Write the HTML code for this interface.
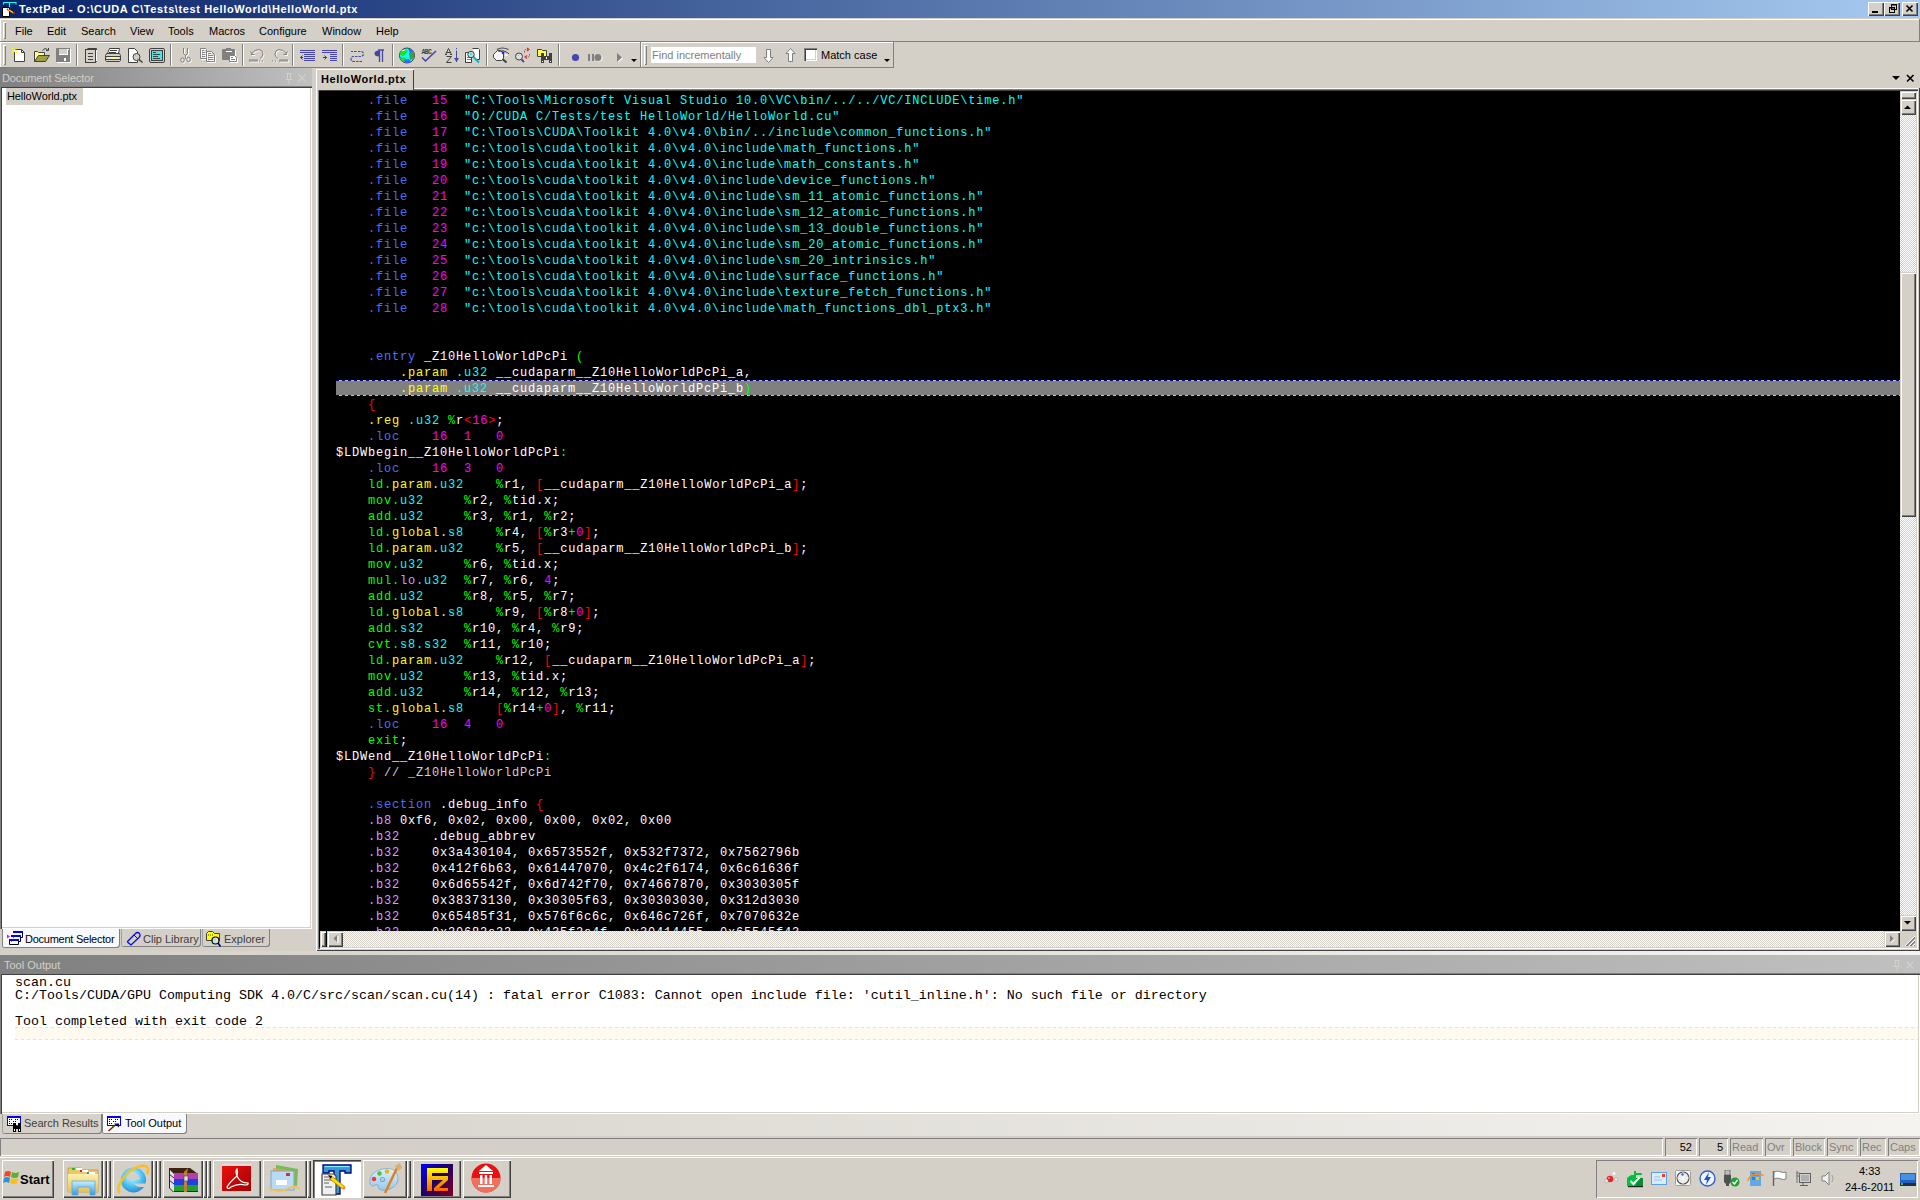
<!DOCTYPE html>
<html><head><meta charset="utf-8"><style>
html,body{margin:0;padding:0}
body{width:1920px;height:1200px;overflow:hidden;position:relative;background:#d4d0c8;font-family:"Liberation Sans",sans-serif;font-size:11px;color:#000}
.a{position:absolute}
.t{position:absolute;white-space:pre;line-height:13px}
#title{left:0;top:0;width:1920px;height:18px;background:linear-gradient(to right,#0a246a,#a6caf0)}
#title .tt{left:19px;top:3px;color:#fff;font-weight:bold;font-size:11px}
.r3d{background:#d4d0c8;box-shadow:inset 1px 1px 0 #fff,inset -1px -1px 0 #404040,inset -2px -2px 0 #808080}
.r3dl{background:#d4d0c8;box-shadow:inset 1px 1px 0 #d4d0c8,inset 2px 2px 0 #fff,inset -1px -1px 0 #404040,inset -2px -2px 0 #808080}
.sunk{box-shadow:inset 1px 1px 0 #808080,inset -1px -1px 0 #fff}
.sunk2{box-shadow:inset 1px 1px 0 #808080,inset 2px 2px 0 #404040,inset -1px -1px 0 #fff,inset -2px -2px 0 #d4d0c8}
.chk{background:conic-gradient(#fff 25%,#d4d0c8 0 50%,#fff 0 75%,#d4d0c8 0) 0 0/2px 2px}
.menu span{position:absolute;top:25px;line-height:13px}
#editor{left:319px;top:91px;width:1581px;height:840px;background:#000;overflow:hidden}
#code{position:absolute;left:17px;top:2px;width:1600px;height:900px}
.ln{position:absolute;left:0;height:16px;line-height:16px;white-space:pre;font-family:"Liberation Mono",monospace;font-size:12px;letter-spacing:0.8px;color:#fff}
.b{color:#4a70ff}.y{color:#ffff00}.g{color:#00ff00}.r{color:#ff0000}.m{color:#ff00ff}.c{color:#00ffff}.l{color:#c8a0ff}.q{color:#d0d0d0}
.mono{font-family:"Liberation Mono",monospace}
.gl{position:absolute;background:#808080}
.wl{position:absolute;background:#fff}
.sep{position:absolute;top:44px;width:2px;height:22px;box-shadow:inset 1px 0 0 #808080,inset -1px 0 0 #fff}
.sfield{position:absolute;top:1138px;height:18px;box-sizing:border-box;box-shadow:inset 1px 1px 0 #808080,inset -1px -1px 0 #fff;text-align:right;line-height:19px;padding-right:5px;font-size:11px}
.tbtn{position:absolute;top:1160px;height:38px;box-sizing:border-box}
.tgrip{position:absolute;top:1160px;width:4px;height:38px}

</style></head><body>
<div id="title" class="a">
  <div class="t tt" style="letter-spacing:0.62px">TextPad - O:\CUDA C\Tests\test HelloWorld\HelloWorld.ptx</div>
  <svg class="a" style="left:0;top:0" width="18" height="18"><rect x="2" y="1" width="15" height="15" fill="#0a246a"/><path d="M3 2.5H16.5M3.5 2V4.5M16 2V4.5M9.5 2.5V15" stroke="#00ffff" stroke-width="1.2"/><path d="M2.5 7.5H9.5V16.5H2.5Z" fill="#fff" stroke="#000"/><path d="M7 9L14.5 13.5" stroke="#ff2000" stroke-width="2"/><path d="M8 9.5L13 12.5" stroke="#ffff00" stroke-width="1"/></svg>
  <div class="a r3d" style="left:1868px;top:2px;width:16px;height:14px"></div>
  <div class="a r3d" style="left:1884px;top:2px;width:16px;height:14px"></div>
  <div class="a r3d" style="left:1902px;top:2px;width:16px;height:14px"></div>
  <svg class="a" style="left:1860px;top:0" width="60" height="18"><rect x="12" y="11" width="6" height="2" fill="#000"/><rect x="29.5" y="7.5" width="5" height="5" fill="none" stroke="#000"/><rect x="29" y="7" width="6" height="1.5" fill="#000"/><rect x="31.5" y="4.5" width="5" height="5" fill="none" stroke="#000"/><rect x="31" y="4" width="6" height="1.5" fill="#000"/><path d="M46.5 5.5L52.5 11.5M52.5 5.5L46.5 11.5" stroke="#000" stroke-width="1.6"/></svg>
</div>
<!-- rebar lines -->
<div class="wl" style="left:0;top:19px;width:1919px;height:1px"></div>
<div class="wl" style="left:0;top:19px;width:1px;height:22px"></div>
<div class="gl" style="left:1919px;top:19px;width:1px;height:23px"></div>
<div class="gl" style="left:0;top:41px;width:1920px;height:1px"></div>
<div class="wl" style="left:0;top:42px;width:893px;height:1px"></div>
<div class="wl" style="left:0;top:42px;width:1px;height:25px"></div>
<div class="gl" style="left:0;top:67px;width:894px;height:1px"></div>
<div class="gl" style="left:640px;top:42px;width:1px;height:26px"></div>
<div class="wl" style="left:641px;top:42px;width:1px;height:25px"></div>
<div class="gl" style="left:893px;top:42px;width:1px;height:26px"></div>
<!-- grippers -->
<div class="a" style="left:3px;top:22px;width:3px;height:17px;box-shadow:inset 1px 1px 0 #fff,inset -1px -1px 0 #808080"></div>
<div class="a" style="left:3px;top:45px;width:3px;height:20px;box-shadow:inset 1px 1px 0 #fff,inset -1px -1px 0 #808080"></div>
<div class="a" style="left:644px;top:45px;width:3px;height:20px;box-shadow:inset 1px 1px 0 #fff,inset -1px -1px 0 #808080"></div>
<div class="menu">
  <span style="left:15px">File</span><span style="left:47px">Edit</span><span style="left:81px">Search</span><span style="left:130px">View</span><span style="left:168px">Tools</span><span style="left:209px">Macros</span><span style="left:259px">Configure</span><span style="left:322px">Window</span><span style="left:376px">Help</span>
</div>
<!-- toolbar separators -->
<div class="sep" style="left:76px"></div><div class="sep" style="left:170px"></div><div class="sep" style="left:242px"></div><div class="sep" style="left:292px"></div><div class="sep" style="left:342px"></div><div class="sep" style="left:392px"></div><div class="sep" style="left:486px"></div><div class="sep" style="left:558px"></div>
<svg class="a" style="left:0;top:0" width="900" height="68" viewBox="0 0 900 68"><path d="M14.5 49.5H21.5L24.5 52.5V61.5H14.5Z" fill="#fff" stroke="#404040"/><path d="M21.5 49.5V52.5H24.5" fill="none" stroke="#404040"/><circle cx="14.5" cy="50.5" r="1.6" fill="#ffff00"/><g fill="#ffff00"><rect x="12" y="48" width="1" height="1"/><rect x="16" y="48" width="1" height="1"/><rect x="12" y="52" width="1" height="1"/><rect x="16" y="52" width="1" height="1"/></g><rect x="14" y="50" width="1" height="1" fill="#fff"/><path d="M34.5 51.5H37.5L38.5 52.5H44.5V55" fill="none" stroke="#404040"/><path d="M34.5 51.5V61.5" stroke="#404040"/><path d="M35 52H38V53H44V55H39L35 61Z" fill="#ffff80"/><path d="M34.5 61.5L38.5 55.5H49.5L45.5 61.5Z" fill="#a0a040" stroke="#404040"/><path d="M42.5 50.5Q45 47 47.5 49.5" fill="none" stroke="#404040"/><path d="M46 50.5H48.5V48" fill="none" stroke="#404040"/><rect x="56" y="48" width="14" height="14" fill="#808080"/><rect x="57" y="62" width="14" height="1" fill="#fff"/><rect x="70" y="49" width="1" height="13" fill="#fff"/><rect x="59" y="49" width="8" height="5" fill="#d4d0c8"/><rect x="59" y="54" width="8" height="1" fill="#fff"/><rect x="67" y="49" width="1" height="6" fill="#fff"/><rect x="64" y="58" width="2" height="3" fill="#fff"/><rect x="68" y="49" width="1" height="1" fill="#fff"/><path d="M87.5 48.5H96.5V61.5L95.5 62.5" fill="none" stroke="#404040"/><rect x="85.5" y="49.5" width="10" height="13" fill="#d4d0c8" stroke="#404040"/><rect x="96" y="50" width="1" height="11" fill="#fff"/><path d="M88 53.5H93M88 56.5H93M88 59.5H93" stroke="#404040"/><path d="M109.5 48.5H119.5L118.5 53.5H107.5Z" fill="#fff" stroke="#404040"/><path d="M110 50.5H117M109 52.5H116" stroke="#404040"/><path d="M106.5 53.5H119.5L120.5 55.5V60.5L119.5 61.5H106.5L105.5 60.5V55.5Z" fill="#d4d0c8" stroke="#404040"/><path d="M106 56.5H120M106 59.5H120" stroke="#404040"/><rect x="112" y="57" width="3" height="2" fill="#ffff00"/><rect x="107" y="57" width="12" height="2" fill="#fff" opacity=".5"/><path d="M128.5 48.5H134.5L137.5 51.5V62.5H128.5Z" fill="#fff" stroke="#404040"/><circle cx="136.5" cy="57" r="3.5" fill="#d4d0c8" stroke="#404040"/><rect x="135" y="55" width="1" height="1" fill="#00ffff"/><rect x="137" y="58" width="1" height="1" fill="#00ffff"/><path d="M139 59.5L142.5 62.5" stroke="#404040" stroke-width="1.6"/><rect x="149.5" y="48.5" width="15" height="14" rx="1.5" fill="#d4d0c8" stroke="#404040"/><rect x="151.5" y="50.5" width="11" height="10" fill="#40e8e8" stroke="#404040"/><path d="M153 52.5H156M153 54.5H160M153 56.5H158M153 58.5H160" stroke="#404040"/><g transform="translate(1,1)" stroke="#fff" fill="none"><path d="M183.5 48V53.5L185.5 55.5L187.5 53.5V48"/><path d="M185.5 55.5V59"/><ellipse cx="182.5" cy="60" rx="1.8" ry="2.2"/><ellipse cx="188.5" cy="59.5" rx="1.8" ry="2.2"/></g><g stroke="#808080" fill="none"><path d="M183.5 48V53.5L185.5 55.5L187.5 53.5V48"/><path d="M185.5 55.5V59"/><ellipse cx="182.5" cy="60" rx="1.8" ry="2.2"/><ellipse cx="188.5" cy="59.5" rx="1.8" ry="2.2"/></g><g transform="translate(1,1)" stroke="#fff" fill="none"><path d="M200.5 48.5H205.5L206.5 49.5V57.5M206 58.5H200.5V48.5"/><path d="M202 50.5H204M202 52.5H205M202 54.5H205M202 56.5H205"/><path d="M206.5 51.5H211.5L214.5 54.5V61.5H206.5Z"/><path d="M208 53.5H211M208 55.5H213M208 57.5H213M208 59.5H213"/></g><g stroke="#808080" fill="none"><path d="M200.5 48.5H205.5L206.5 49.5V57.5M206 58.5H200.5V48.5"/><path d="M202 50.5H204M202 52.5H205M202 54.5H205M202 56.5H205"/><path d="M206.5 51.5H211.5L214.5 54.5V61.5H206.5Z"/><path d="M208 53.5H211M208 55.5H213M208 57.5H213M208 59.5H213"/></g><rect x="223" y="50" width="13" height="10" rx="1" fill="#fff"/><rect x="222" y="49" width="13" height="11" rx="1" fill="#808080"/><rect x="226" y="48" width="5" height="2" fill="#808080"/><rect x="226" y="51" width="6" height="1" fill="#fff"/><g transform="translate(1,1)" stroke="#fff" fill="none"><path d="M229.5 55.5H234.5L236.5 57.5V61.5H229.5Z"/><path d="M231 57.5H233M231 59.5H235"/></g><g stroke="#808080" fill="#fff"><path d="M229.5 55.5H234.5L236.5 57.5V61.5H229.5Z"/><path d="M231 57.5H233M231 59.5H235"/></g><g transform="translate(1,1)" stroke="#fff" fill="none"><path d="M250.5 51.5L253 55" /><path d="M251 54.5H254.5"/><path d="M251.5 53.5Q255 49.5 259 49.5Q263 50 263 54Q263 57 260 58.5"/><path d="M249 60H258M249 61H258M259.5 60.5V61.5M262.5 60.5V61.5"/></g><g stroke="#808080" fill="none"><path d="M250.5 51.5L253 55" /><path d="M251 54.5H254.5"/><path d="M251.5 53.5Q255 49.5 259 49.5Q263 50 263 54Q263 57 260 58.5"/><path d="M249 60H258M249 61H258M259.5 60.5V61.5M262.5 60.5V61.5"/></g><g transform="translate(1,1)" stroke="#fff" fill="none"><path d="M287.5 51.5L285 55" /><path d="M287 54.5H283.5"/><path d="M286.5 53.5Q283 49.5 279 49.5Q275 50 275 54Q275 57 278 58.5"/><path d="M279 60H288M279 61H288M272.5 60.5V61.5M275.5 60.5V61.5"/></g><g stroke="#808080" fill="none"><path d="M287.5 51.5L285 55" /><path d="M287 54.5H283.5"/><path d="M286.5 53.5Q283 49.5 279 49.5Q275 50 275 54Q275 57 278 58.5"/><path d="M279 60H288M279 61H288M272.5 60.5V61.5M275.5 60.5V61.5"/></g><path d="M300 50.5H315M300 52.5H315M304 54.5H315M304 56.5H315M304 58.5H315M304 60.5H315" stroke="#4646a8"/><path d="M302.5 55.5L300.5 57.5L302.5 59.5M300.5 57.5H303" fill="none" stroke="#404040"/><path d="M322 50.5H337M322 52.5H337M330 54.5H337M330 56.5H337M330 58.5H337M330 60.5H337" stroke="#4646a8"/><path d="M324.5 55.5L326.5 57.5L324.5 59.5M323 57.5H326.5" fill="none" stroke="#404040"/><path d="M351 51.5H353M354 51.5H357M358 51.5L361.5 51.5Q363.5 52 363.5 54Q363.5 56 361 56.5H353Q351 57 351 59Q351 61 353.5 61.5H363" fill="none" stroke="#4646a8" stroke-width="1.2" stroke-dasharray="2.5 1"/><path d="M378 50H384M379.5 50V62M382.5 50V62" stroke="#4646a8" stroke-width="1.3"/><path d="M379 50.5Q374.5 50.5 374.5 53.5Q374.5 56.5 379 56.5Z" fill="#4646a8"/><circle cx="407" cy="55.5" r="7.5" fill="#00ffff" stroke="#202020" stroke-width="0.8"/><path d="M401 50Q405 49 408 51L404 56L400 55Z" fill="#20e020"/><path d="M409 53L413 50Q415 54 414 58L410 60Z" fill="#40a040"/><path d="M401 57L406 58L408 62Q404 63 401 60Z" fill="#20e020"/><path d="M408 48.5Q412 49 413.5 51L410 53Z" fill="#4060ff"/><path d="M404 60L409 59L411 62Q408 63.5 405 62.5Z" fill="#4060ff"/><path d="M402 51L405 50" stroke="#fff"/><text x="421.5" y="53.5" font-family="Liberation Mono" font-size="6.5" font-weight="bold" fill="#404040" letter-spacing="-0.6">ABC</text><path d="M422 57.5L425.5 61L436 51" fill="none" stroke="#4646a8" stroke-width="1.6"/><path d="M445.5 54.5L448.5 48.5L451.5 54.5M446.5 52.5H450.5M445 54.5H447M450 54.5H452" fill="none" stroke="#404040"/><path d="M446.5 56.5H451.5L446.5 62.5H451.5" fill="none" stroke="#404040"/><path d="M456.5 48V49M456.5 50.5V62" stroke="#4646a8"/><path d="M454 58L456.5 62L459 58Z" fill="#4646a8"/><path d="M472.5 48.5H478.5L479.5 49.5V59.5H476" fill="#fff" stroke="#404040"/><path d="M465.5 52.5H470.5L471.5 53.5V62.5H465.5Z" fill="#fff" stroke="#404040"/><path d="M467 57.5H470M467 59.5H471" stroke="#808080"/><circle cx="471" cy="54.5" r="3.2" fill="#c0e0e0" stroke="#404040"/><rect x="470" y="53" width="2" height="2" fill="#00ffff"/><path d="M473.5 57L479 62.5" stroke="#00b0d0" stroke-width="1.8"/><path d="M495.5 52.5L497.5 50.5H500.5L503.5 53.5V58.5L501.5 60.5H496.5L493.5 57.5V54.5Z" fill="#f4f4f4" stroke="#404040"/><path d="M497 49.5Q502 46.5 508.5 49.5" fill="none" stroke="#404040" stroke-width="1.1"/><path d="M498.5 51.5Q503 49.5 507.5 52.5L509 54" fill="none" stroke="#404040"/><circle cx="503" cy="52.8" r="1.4" fill="#2020ff"/><path d="M505 54L508 55L505.5 56.5Z" fill="#fff"/><path d="M502.5 59L506.5 62.5" stroke="#404040" stroke-width="2"/><circle cx="519" cy="56.5" r="3.5" fill="#e0e0e0" stroke="#404040"/><rect x="518" y="55" width="1" height="1" fill="#00ffff"/><path d="M521.5 59.5L524 62" stroke="#4646a8" stroke-width="1.8"/><path d="M524.5 52.5V51Q524.5 49.5 526.5 49.5H528" fill="none" stroke="#c04040" stroke-dasharray="1.5 .8"/><path d="M527 48L529 49.5L527 51" fill="none" stroke="#c04040" stroke-width="1.2"/><path d="M529.5 54V55.5Q529.5 57 527.5 57H526" fill="none" stroke="#c04040" stroke-dasharray="1.5 .8"/><path d="M527 55.5L525 57L527 58.5" fill="none" stroke="#c04040" stroke-width="1.2"/><path d="M537.5 49.5H541.5L542.5 50.5H546.5V56.5H537.5Z" fill="#ffff40" stroke="#404040"/><rect x="541" y="53" width="3" height="10" fill="#404040"/><rect x="549" y="53" width="3" height="10" fill="#404040"/><rect x="543" y="56" width="7" height="4" fill="#404040"/><rect x="542" y="61" width="1" height="1" fill="#fff"/><rect x="550" y="61" width="1" height="1" fill="#fff"/><rect x="546" y="57" width="1" height="2" fill="#fff"/><circle cx="575.5" cy="57.5" r="3.6" fill="#4646a8"/><rect x="589" y="55" width="1" height="6" fill="#fff"/><rect x="588" y="54" width="2" height="7" fill="#808080"/><rect x="592" y="54" width="2" height="7" fill="#808080"/><circle cx="599" cy="58" r="3.5" fill="#fff"/><circle cx="598" cy="57.5" r="3.5" fill="#808080"/><path d="M618 54L623 58.5L618 62.5" fill="#fff"/><path d="M617 53L622 57.5L617 62Z" fill="#808080"/><path d="M631 59H637L634 62Z" fill="#000"/><path d="M766.5 49.5H770.5V57.5H773L768.5 62.5L764 57.5H766.5Z" fill="#fff" stroke="#808080"/><path d="M788.5 61.5H792.5V53.5H795L790.5 48.5L786 53.5H788.5Z" fill="#fff" stroke="#808080"/><path d="M884 59H890L887 62Z" fill="#000"/></svg>
<!-- find box -->
<div class="a" style="left:651px;top:47px;width:105px;height:16px;background:#fff"></div>
<div class="t" style="left:652px;top:49px;color:#808080">Find incrementally</div>
<div class="a" style="left:804px;top:48px;width:13px;height:13px;background:#fff;box-shadow:inset 1px 1px 0 #808080,inset 2px 2px 0 #404040,inset -1px -1px 0 #fff,inset -2px -2px 0 #d4d0c8"></div>
<div class="t" style="left:821px;top:49px">Match case</div>
<!-- doc selector -->
<div class="a" style="left:0;top:68px;width:312px;height:18px;background:linear-gradient(to right,#808080,#c0c0c0)"></div>
<div class="t" style="left:2px;top:72px;color:#d4d0c8;letter-spacing:-0.1px">Document Selector</div>
<svg class="a" style="left:283px;top:72px" width="30" height="14"><path d="M3.5 1.5H8.5M4.5 1.5V7.5H7.5V1.5M2.5 7.5H9.5M6 7.5V12" fill="none" stroke="#d4d0c8"/><path d="M15.5 2.5L22.5 9.5M22.5 2.5L15.5 9.5" stroke="#d4d0c8" stroke-width="1.1"/></svg>
<div class="a sunk2" style="left:0;top:86px;width:312px;height:843px;background:#fff"></div>
<div class="a" style="left:6px;top:88px;width:77px;height:17px;background:#d4d0c8"></div>
<div class="t" style="left:7px;top:90px;letter-spacing:-0.1px">HelloWorld.ptx</div>
<!-- left bottom tabs -->
<div class="a" style="left:2px;top:929px;width:118px;height:19px;background:#f8f9fc;border-radius:0 0 3px 3px;box-shadow:inset 1px 0 0 #808080,inset -1px -1px 0 #808080"></div>
<div class="a" style="left:121px;top:929px;width:80px;height:18px;border-radius:0 0 3px 3px;box-shadow:inset 1px 0 0 #a0a0a0,inset -1px -1px 0 #808080"></div>
<div class="a" style="left:202px;top:929px;width:68px;height:18px;border-radius:0 0 3px 3px;box-shadow:inset 1px 0 0 #a0a0a0,inset -1px -1px 0 #808080"></div>
<div class="t" style="left:25px;top:933px;letter-spacing:-0.25px">Document Selector</div>
<div class="t" style="left:143px;top:933px;color:#404040">Clip Library</div>
<div class="t" style="left:224px;top:933px;color:#404040">Explorer</div>
<svg class="a" style="left:0px;top:928px" width="26" height="20" viewBox="0 0 26 20"><path d="M13.5 3.5H22.5V9.5H20.5M11.5 7.5H20.5V13.5H18.5M9.5 11.5H18.5V16.5H9.5Z" fill="#fff" stroke="#000"/><path d="M13.5 9.5V7.5M11.5 13.5V11.5" stroke="#000"/><rect x="13" y="3" width="10" height="2" fill="#0000ff"/><rect x="11" y="7" width="10" height="2" fill="#0000ff"/><rect x="9" y="11" width="10" height="2" fill="#0000ff"/><path d="M7 6.5L10 8.5L7 10.5Z" fill="#ff00ff"/><rect x="7" y="7" width="1" height="3" fill="#ff00ff"/></svg><svg class="a" style="left:125px;top:930px" width="17" height="16" viewBox="0 0 17 16"><path d="M2.5 11.5L10.5 3.5Q12.5 1.5 14.5 3.5Q16 5.5 14 7.5L6 15L3 12.5Z" fill="none" stroke="#0000ff" stroke-width="1.2"/><path d="M9 5L13 9" stroke="#0000ff"/></svg><svg class="a" style="left:205px;top:930px" width="18" height="18" viewBox="0 0 18 18"><path d="M1.5 3.5L3.5 1.5H7.5L9.5 3.5H14.5V10.5H1.5Z" fill="#ffff00" stroke="#404040"/><path d="M3 5H9" stroke="#404040" stroke-dasharray="1 1"/><circle cx="10.5" cy="10.5" r="3.5" fill="#e0e0e0" stroke="#000" stroke-width="1.2"/><rect x="9" y="9" width="1.5" height="1.5" fill="#00ffff"/><path d="M13 13L15.5 16.5" stroke="#000080" stroke-width="1.6"/></svg>
<!-- editor frame -->
<div class="a" style="left:316px;top:88px;width:1604px;height:863px;box-shadow:inset 1px 0 0 #fff,inset 0 -1px 0 #404040,inset -1px 0 0 #404040"></div>
<div class="wl" style="left:413px;top:88px;width:1505px;height:1px"></div>
<div class="a" style="left:318px;top:89px;width:1600px;height:860px;box-shadow:inset 1px 1px 0 #808080,inset 2px 2px 0 #404040,inset -1px -1px 0 #fff,inset -2px -2px 0 #d4d0c8"></div>
<!-- editor tab -->
<div class="a" style="left:316px;top:69px;width:98px;height:21px;background:#d4d0c8;box-shadow:inset 1px 1px 0 #fff,inset -1px 0 0 #404040"></div>
<div class="t" style="left:321px;top:73px;font-weight:bold;letter-spacing:0.56px">HelloWorld.ptx</div>
<div class="a" style="left:1892px;top:76px;width:0;height:0;border-left:4px solid transparent;border-right:4px solid transparent;border-top:4px solid #000"></div>
<svg class="a" style="left:1905px;top:73px" width="12" height="12"><path d="M2 2L8.5 8.5M8.5 2L2 8.5" stroke="#000" stroke-width="1.6"/></svg>
<div id="editor" class="a">
<div class="a" style="left:17px;top:289px;width:1564px;height:16px;background:#808080"></div>
<div id="code">
<div class="ln" style="top:0px">    <span class="b">.file</span>   <span class="m">15</span>  <span class="c">"C:\Tools\Microsoft Visual Studio 10.0\VC\bin/../../VC/INCLUDE\time.h"</span></div>
<div class="ln" style="top:16px">    <span class="b">.file</span>   <span class="m">16</span>  <span class="c">"O:/CUDA C/Tests/test HelloWorld/HelloWorld.cu"</span></div>
<div class="ln" style="top:32px">    <span class="b">.file</span>   <span class="m">17</span>  <span class="c">"C:\Tools\CUDA\Toolkit 4.0\v4.0\bin/../include\common_functions.h"</span></div>
<div class="ln" style="top:48px">    <span class="b">.file</span>   <span class="m">18</span>  <span class="c">"c:\tools\cuda\toolkit 4.0\v4.0\include\math_functions.h"</span></div>
<div class="ln" style="top:64px">    <span class="b">.file</span>   <span class="m">19</span>  <span class="c">"c:\tools\cuda\toolkit 4.0\v4.0\include\math_constants.h"</span></div>
<div class="ln" style="top:80px">    <span class="b">.file</span>   <span class="m">20</span>  <span class="c">"c:\tools\cuda\toolkit 4.0\v4.0\include\device_functions.h"</span></div>
<div class="ln" style="top:96px">    <span class="b">.file</span>   <span class="m">21</span>  <span class="c">"c:\tools\cuda\toolkit 4.0\v4.0\include\sm_11_atomic_functions.h"</span></div>
<div class="ln" style="top:112px">    <span class="b">.file</span>   <span class="m">22</span>  <span class="c">"c:\tools\cuda\toolkit 4.0\v4.0\include\sm_12_atomic_functions.h"</span></div>
<div class="ln" style="top:128px">    <span class="b">.file</span>   <span class="m">23</span>  <span class="c">"c:\tools\cuda\toolkit 4.0\v4.0\include\sm_13_double_functions.h"</span></div>
<div class="ln" style="top:144px">    <span class="b">.file</span>   <span class="m">24</span>  <span class="c">"c:\tools\cuda\toolkit 4.0\v4.0\include\sm_20_atomic_functions.h"</span></div>
<div class="ln" style="top:160px">    <span class="b">.file</span>   <span class="m">25</span>  <span class="c">"c:\tools\cuda\toolkit 4.0\v4.0\include\sm_20_intrinsics.h"</span></div>
<div class="ln" style="top:176px">    <span class="b">.file</span>   <span class="m">26</span>  <span class="c">"c:\tools\cuda\toolkit 4.0\v4.0\include\surface_functions.h"</span></div>
<div class="ln" style="top:192px">    <span class="b">.file</span>   <span class="m">27</span>  <span class="c">"c:\tools\cuda\toolkit 4.0\v4.0\include\texture_fetch_functions.h"</span></div>
<div class="ln" style="top:208px">    <span class="b">.file</span>   <span class="m">28</span>  <span class="c">"c:\tools\cuda\toolkit 4.0\v4.0\include\math_functions_dbl_ptx3.h"</span></div>
<div class="ln" style="top:224px"></div>
<div class="ln" style="top:240px"></div>
<div class="ln" style="top:256px">    <span class="b">.entry</span> _Z10HelloWorldPcPi <span class="g">(</span></div>
<div class="ln" style="top:272px">        <span class="y">.param</span> <span class="c">.u32</span> __cudaparm__Z10HelloWorldPcPi_a,</div>
<div class="ln" style="top:288px">        <span class="y">.param</span> <span class="c">.u32</span> __cudaparm__Z10HelloWorldPcPi_b<span class="g">)</span></div>
<div class="ln" style="top:304px">    <span class="r">{</span></div>
<div class="ln" style="top:320px">    <span class="y">.reg</span> <span class="c">.u32</span> <span class="g">%</span>r<span class="r">&lt;</span><span class="m">16</span><span class="r">&gt;</span>;</div>
<div class="ln" style="top:336px">    <span class="b">.loc</span>    <span class="m">16</span>  <span class="m">1</span>   <span class="m">0</span></div>
<div class="ln" style="top:352px">$LDWbegin__Z10HelloWorldPcPi<span class="g">:</span></div>
<div class="ln" style="top:368px">    <span class="b">.loc</span>    <span class="m">16</span>  <span class="m">3</span>   <span class="m">0</span></div>
<div class="ln" style="top:384px">    <span class="g">ld.</span><span class="y">param.</span><span class="c">u32</span>    <span class="g">%</span>r1, <span class="r">[</span>__cudaparm__Z10HelloWorldPcPi_a<span class="r">]</span>;</div>
<div class="ln" style="top:400px">    <span class="g">mov.</span><span class="c">u32</span>     <span class="g">%</span>r2, <span class="g">%</span>tid.x;</div>
<div class="ln" style="top:416px">    <span class="g">add.</span><span class="c">u32</span>     <span class="g">%</span>r3, <span class="g">%</span>r1, <span class="g">%</span>r2;</div>
<div class="ln" style="top:432px">    <span class="g">ld.</span><span class="y">global.</span><span class="c">s8</span>    <span class="g">%</span>r4, <span class="r">[</span><span class="g">%</span>r3<span class="g">+</span><span class="m">0</span><span class="r">]</span>;</div>
<div class="ln" style="top:448px">    <span class="g">ld.</span><span class="y">param.</span><span class="c">u32</span>    <span class="g">%</span>r5, <span class="r">[</span>__cudaparm__Z10HelloWorldPcPi_b<span class="r">]</span>;</div>
<div class="ln" style="top:464px">    <span class="g">mov.</span><span class="c">u32</span>     <span class="g">%</span>r6, <span class="g">%</span>tid.x;</div>
<div class="ln" style="top:480px">    <span class="g">mul.</span><span class="l">lo.</span><span class="c">u32</span>  <span class="g">%</span>r7, <span class="g">%</span>r6, <span class="m">4</span>;</div>
<div class="ln" style="top:496px">    <span class="g">add.</span><span class="c">u32</span>     <span class="g">%</span>r8, <span class="g">%</span>r5, <span class="g">%</span>r7;</div>
<div class="ln" style="top:512px">    <span class="g">ld.</span><span class="y">global.</span><span class="c">s8</span>    <span class="g">%</span>r9, <span class="r">[</span><span class="g">%</span>r8<span class="g">+</span><span class="m">0</span><span class="r">]</span>;</div>
<div class="ln" style="top:528px">    <span class="g">add.</span><span class="c">s32</span>     <span class="g">%</span>r10, <span class="g">%</span>r4, <span class="g">%</span>r9;</div>
<div class="ln" style="top:544px">    <span class="g">cvt.</span><span class="c">s8.s32</span>  <span class="g">%</span>r11, <span class="g">%</span>r10;</div>
<div class="ln" style="top:560px">    <span class="g">ld.</span><span class="y">param.</span><span class="c">u32</span>    <span class="g">%</span>r12, <span class="r">[</span>__cudaparm__Z10HelloWorldPcPi_a<span class="r">]</span>;</div>
<div class="ln" style="top:576px">    <span class="g">mov.</span><span class="c">u32</span>     <span class="g">%</span>r13, <span class="g">%</span>tid.x;</div>
<div class="ln" style="top:592px">    <span class="g">add.</span><span class="c">u32</span>     <span class="g">%</span>r14, <span class="g">%</span>r12, <span class="g">%</span>r13;</div>
<div class="ln" style="top:608px">    <span class="g">st.</span><span class="y">global.</span><span class="c">s8</span>    <span class="r">[</span><span class="g">%</span>r14<span class="g">+</span><span class="m">0</span><span class="r">]</span>, <span class="g">%</span>r11;</div>
<div class="ln" style="top:624px">    <span class="b">.loc</span>    <span class="m">16</span>  <span class="m">4</span>   <span class="m">0</span></div>
<div class="ln" style="top:640px">    <span class="g">exit</span>;</div>
<div class="ln" style="top:656px">$LDWend__Z10HelloWorldPcPi<span class="g">:</span></div>
<div class="ln" style="top:672px">    <span class="r">}</span><span class="q"> // _Z10HelloWorldPcPi</span></div>
<div class="ln" style="top:688px"></div>
<div class="ln" style="top:704px">    <span class="b">.section</span> .debug_info <span class="r">{</span></div>
<div class="ln" style="top:720px">    <span class="l">.b8</span> 0xf6, 0x02, 0x00, 0x00, 0x02, 0x00</div>
<div class="ln" style="top:736px">    <span class="l">.b32</span>    .debug_abbrev</div>
<div class="ln" style="top:752px">    <span class="l">.b32</span>    0x3a430104, 0x6573552f, 0x532f7372, 0x7562796b</div>
<div class="ln" style="top:768px">    <span class="l">.b32</span>    0x412f6b63, 0x61447070, 0x4c2f6174, 0x6c61636f</div>
<div class="ln" style="top:784px">    <span class="l">.b32</span>    0x6d65542f, 0x6d742f70, 0x74667870, 0x3030305f</div>
<div class="ln" style="top:800px">    <span class="l">.b32</span>    0x38373130, 0x30305f63, 0x30303030, 0x312d3030</div>
<div class="ln" style="top:816px">    <span class="l">.b32</span>    0x65485f31, 0x576f6c6c, 0x646c726f, 0x7070632e</div>
<div class="ln" style="top:832px">    <span class="l">.b32</span>    0x20682e32, 0x435f2e4f, 0x30414455, 0x65545f43</div>
</div>
</div>
<div class="a" style="left:336px;top:380px;width:1564px;height:1px;background:repeating-linear-gradient(to right,#000080 0 3px,#c0c0c0 3px 6px)"></div>
<div class="a" style="left:336px;top:395px;width:1564px;height:1px;background:repeating-linear-gradient(to right,#000080 0 3px,#c0c0c0 3px 6px)"></div>
<!-- v scrollbar -->
<div class="a chk" style="left:1900px;top:91px;width:16px;height:840px"></div>
<div class="a r3dl" style="left:1900px;top:91px;width:16px;height:8px"></div>
<div class="a r3dl" style="left:1900px;top:99px;width:16px;height:16px"></div>
<div class="a r3dl" style="left:1900px;top:272px;width:16px;height:245px"></div>
<div class="a r3dl" style="left:1900px;top:915px;width:16px;height:16px"></div>
<!-- h scrollbar -->
<div class="a" style="left:319px;top:931px;width:1581px;height:16px;background:#000"></div>
<div class="a chk" style="left:343px;top:931px;width:1541px;height:16px"></div>
<div class="a r3dl" style="left:320px;top:931px;width:6px;height:16px"></div>
<div class="a r3dl" style="left:327px;top:931px;width:16px;height:16px"></div>
<div class="a r3dl" style="left:1884px;top:931px;width:16px;height:16px"></div>
<div class="a" style="left:1900px;top:931px;width:16px;height:16px;background:#d4d0c8"></div>
<svg class="a" style="left:1900px;top:99px" width="16" height="16"><path d="M4 10H11L7.5 6.5Z" fill="#000"/></svg><svg class="a" style="left:1900px;top:915px" width="16" height="16"><path d="M4 6H11L7.5 9.5Z" fill="#000"/></svg><svg class="a" style="left:327px;top:931px" width="16" height="16"><path d="M10 4V11L6.5 7.5Z" fill="#808080"/><path d="M11 5V12" stroke="#fff"/></svg><svg class="a" style="left:1884px;top:931px" width="16" height="16"><path d="M6 4V11L9.5 7.5Z" fill="#808080"/><path d="M7 12L10.5 8.5" stroke="#fff"/></svg><svg class="a" style="left:1900px;top:931px" width="16" height="16"><path d="M15 5L5 15M15 9L9 15M15 13L13 15" stroke="#fff"/><path d="M15 6L6 15M15 7L7 15M15 10L10 15M15 11L11 15M15 14L14 15" stroke="#808080"/></svg>
<!-- tool output -->
<div class="a" style="left:0;top:951px;width:1920px;height:4px;background:linear-gradient(to right,#d4d0c8,#f4f3f0)"></div>
<div class="a" style="left:0;top:955px;width:1920px;height:18px;background:linear-gradient(to right,#808080,#c0c0c0)"></div>
<div class="t" style="left:4px;top:959px;color:#d4d0c8">Tool Output</div>
<svg class="a" style="left:1891px;top:959px" width="30" height="14"><path d="M3.5 1.5H8.5M4.5 1.5V7.5H7.5V1.5M2.5 7.5H9.5M6 7.5V12" fill="none" stroke="#d4d0c8"/><path d="M15.5 2.5L22.5 9.5M22.5 2.5L15.5 9.5" stroke="#d4d0c8" stroke-width="1.1"/></svg>
<div class="a sunk2" style="left:0;top:973px;width:1920px;height:141px;background:#fff"></div>
<div class="a" style="left:15px;top:1027px;width:1903px;height:13px;background:#fffaf0"></div>
<div class="a" style="left:15px;top:1027px;width:1903px;height:1px;background:repeating-linear-gradient(to right,#ffff00 0 3px,transparent 3px 6px)"></div>
<div class="a" style="left:15px;top:1039px;width:1903px;height:1px;background:repeating-linear-gradient(to right,#ffff00 0 3px,transparent 3px 6px)"></div>
<div class="t mono" style="left:15px;top:976px;font-size:13.333px">scan.cu
C:/Tools/CUDA/GPU Computing SDK 4.0/C/src/scan/scan.cu(14) : fatal error C1083: Cannot open include file: 'cutil_inline.h': No such file or directory

Tool completed with exit code 2</div>
<!-- bottom tabs -->
<div class="a" style="left:0;top:1114px;width:1920px;height:22px;background:linear-gradient(to right,#d4d0c8,#f4f3f0)"></div>
<div class="a" style="left:2px;top:1114px;width:100px;height:20px;border-radius:0 0 3px 3px;box-shadow:inset 1px 0 0 #a0a0a0,inset -1px -1px 0 #808080"></div>
<div class="a" style="left:102px;top:1114px;width:85px;height:20px;background:#f8f9fc;border-radius:0 0 3px 3px;box-shadow:inset 1px 0 0 #808080,inset -1px -1px 0 #808080"></div>
<div class="t" style="left:24px;top:1117px;color:#404040">Search Results</div>
<div class="t" style="left:125px;top:1117px">Tool Output</div>
<svg class="a" style="left:0px;top:1112px" width="130" height="24" viewBox="0 0 130 24"><rect x="7.5" y="4.5" width="13" height="9" fill="#fff" stroke="#0000ff"/><rect x="7" y="4" width="14" height="2" fill="#0000ff"/><rect x="9" y="7" width="1" height="1" fill="#000"/><rect x="11" y="7" width="1" height="1" fill="#000"/><rect x="15" y="7" width="1" height="1" fill="#000"/><rect x="17" y="7" width="1" height="1" fill="#000"/><rect x="9" y="9" width="1" height="1" fill="#000"/><rect x="13" y="9" width="1" height="1" fill="#000"/><rect x="15" y="9" width="1" height="1" fill="#000"/><rect x="9" y="11" width="1" height="1" fill="#000"/><rect x="11" y="11" width="1" height="1" fill="#000"/><path d="M13 11H16V20H13ZM18 11H21V20H18ZM15 14H19V17H15Z" fill="#000"/><rect x="14" y="17" width="1" height="2" fill="#fff"/><rect x="19" y="17" width="1" height="2" fill="#fff"/><rect x="17" y="13" width="1" height="1" fill="#00a000"/><rect x="107.5" y="4.5" width="13" height="9" fill="#fff" stroke="#0000ff"/><rect x="107" y="4" width="14" height="2" fill="#0000ff"/><rect x="109" y="7" width="1" height="1" fill="#000"/><rect x="111" y="7" width="1" height="1" fill="#000"/><rect x="115" y="7" width="1" height="1" fill="#000"/><rect x="117" y="7" width="1" height="1" fill="#000"/><rect x="109" y="9" width="1" height="1" fill="#000"/><rect x="113" y="9" width="1" height="1" fill="#000"/><rect x="115" y="9" width="1" height="1" fill="#000"/><rect x="109" y="11" width="1" height="1" fill="#000"/><rect x="111" y="11" width="1" height="1" fill="#000"/><path d="M108.5 19L116 12.5" stroke="#a00000" stroke-width="1.4"/><path d="M114 11.5H119V15.5Z" fill="#000080"/><rect x="112" y="14" width="2" height="1" fill="#00b000"/></svg>
<!-- status bar -->
<div class="sfield" style="left:0;width:1663px"></div>
<div class="sfield" style="left:1665px;width:32px">52</div>
<div class="sfield" style="left:1699px;width:29px">5</div>
<div class="sfield" style="left:1730px;width:33px;color:#808080;text-align:left;padding-left:2px">Read</div>
<div class="sfield" style="left:1765px;width:26px;color:#808080;text-align:left;padding-left:2px">Ovr</div>
<div class="sfield" style="left:1793px;width:32px;color:#808080;text-align:left;padding-left:2px">Block</div>
<div class="sfield" style="left:1827px;width:31px;color:#808080;text-align:left;padding-left:2px">Sync</div>
<div class="sfield" style="left:1860px;width:26px;color:#808080;text-align:left;padding-left:2px">Rec</div>
<div class="sfield" style="left:1888px;width:32px;color:#808080;text-align:left;padding-left:2px">Caps</div>
<!-- taskbar -->
<div class="wl" style="left:0;top:1157px;width:1920px;height:1px"></div>
<div class="tbtn r3d" style="left:2px;width:52px"></div>
<div class="t" style="left:20px;top:1173px;font-weight:bold;font-size:13px">Start</div>
<div class="tbtn r3d" style="left:63px;width:40px"></div>

<div class="tbtn r3d" style="left:113px;width:40px"></div>

<div class="tbtn r3d" style="left:163px;width:40px"></div>

<div class="tbtn r3d" style="left:213px;width:48px"></div>
<div class="tbtn r3d" style="left:263px;width:44px"></div>

<div class="tbtn" style="left:313px;width:48px;background:#fff;box-shadow:inset 1px 1px 0 #404040,inset 2px 2px 0 #808080,inset -1px -1px 0 #fff"></div>
<div class="tbtn r3d" style="left:363px;width:44px"></div>

<div class="tbtn r3d" style="left:413px;width:48px"></div>
<div class="tbtn r3d" style="left:463px;width:48px"></div>
<div class="tgrip r3d" style="left:103px"></div><div class="tgrip r3d" style="left:107px"></div><div class="tgrip r3d" style="left:153px"></div><div class="tgrip r3d" style="left:157px"></div><div class="tgrip r3d" style="left:203px"></div><div class="tgrip r3d" style="left:207px"></div><div class="tgrip r3d" style="left:307px"></div><div class="tgrip r3d" style="left:407px"></div>
<svg class="a" style="left:3px;top:1170px" width="18" height="16" viewBox="0 0 18 16"><defs></defs><path d="M2 2Q5 0 8 2L7 7Q4 5 1 7Z" fill="#f04820"/><path d="M9 2Q12 4 16 2L15 7Q12 9 8 7Z" fill="#60b030"/><path d="M1 8Q4 6 7 8L6 13Q3 11 0 13Z" fill="#2890e0"/><path d="M8 8Q11 10 15 8L14 13Q11 15 7 13Z" fill="#f8c010"/></svg><svg class="a" style="left:67px;top:1164px" width="34" height="32" viewBox="0 0 34 32"><defs><linearGradient id="fo" x1="0" y1="0" x2="0" y2="1"><stop offset="0" stop-color="#fff0b0"/><stop offset="1" stop-color="#e8c050"/></linearGradient><linearGradient id="fb" x1="0" y1="0" x2="0" y2="1"><stop offset="0" stop-color="#c8f0ff"/><stop offset="1" stop-color="#3898d8"/></linearGradient></defs><path d="M1 4H14L15 6H31V28H1Z" fill="#e8c868" stroke="#c09840" stroke-width=".8"/><rect x="5" y="4" width="3" height="2" fill="#20c020"/><rect x="9" y="4" width="6" height="2" fill="#fff"/><rect x="13" y="6" width="2" height="2" fill="#e02020"/><rect x="15" y="6" width="6" height="2" fill="#fff"/><rect x="20" y="8" width="2" height="2" fill="#2090ff"/><rect x="22" y="8" width="6" height="2" fill="#fff"/><path d="M1 10H31V28H1Z" fill="url(#fo)"/><path d="M5 17H28V31H23V23H11V31H5Z" fill="url(#fb)" stroke="#58a8e0" stroke-width=".8"/></svg><svg class="a" style="left:116px;top:1161px" width="36" height="36" viewBox="0 0 36 36"><defs><radialGradient id="ie" cx=".45" cy=".35" r=".75"><stop offset="0" stop-color="#d8f8ff"/><stop offset=".55" stop-color="#48c0f0"/><stop offset="1" stop-color="#1878c8"/></radialGradient></defs><circle cx="17.5" cy="19" r="12.5" fill="url(#ie)"/><path d="M11 18.5Q11 12.5 17.5 12.5Q24 12.5 24 18.5Z" fill="#d4d0c8"/><path d="M17 22.5H31V26H24Q22 26.5 17 22.5Z" fill="#d4d0c8"/><path d="M4 32Q-1 27 9 15Q19 4 29 5Q34 6 31 13" fill="none" stroke="#f8c020" stroke-width="2.6"/></svg><svg class="a" style="left:166px;top:1166px" width="34" height="28" viewBox="0 0 34 28"><path d="M3 2H24L32 8V26H7L3 22Z" fill="#402010"/><path d="M8 7H32V13H8Z" fill="#b040b0"/><path d="M8 13H32V19H8Z" fill="#2040e0"/><path d="M8 19H32V25H8Z" fill="#20a030"/><path d="M4 4L8 8V26L4 22Z" fill="#e0e0f0"/><path d="M3 8L8 12M3 14L8 18" stroke="#402010"/><path d="M22 2L18 6V26H21V7Z" fill="#c08030"/><rect x="18" y="10" width="4" height="5" fill="#e0e0e0" stroke="#404040" stroke-width=".6"/></svg><svg class="a" style="left:221px;top:1163px" width="32" height="30" viewBox="0 0 32 30"><defs><linearGradient id="ac" x1="0" y1="0" x2="1" y2="1"><stop offset="0" stop-color="#f01010"/><stop offset="1" stop-color="#a00000"/></linearGradient></defs><rect x="1" y="1" width="29" height="27" fill="url(#ac)"/><rect x="1" y="1" width="29" height="2" fill="#f8d8d8"/><path d="M16 6Q14 8 16 13Q19 20 27 20Q28 22 24 22Q17 20 10 24Q7 27 6 24Q8 20 16 13Q17 9 16 6Z" fill="none" stroke="#fff" stroke-width="1.2"/></svg><svg class="a" style="left:269px;top:1164px" width="34" height="30" viewBox="0 0 34 30"><path d="M7 1L29 5L28 22L7 18Z" fill="#70c050"/><path d="M4 4L26 7L25 24L4 21Z" fill="#f8a040"/><rect x="2" y="7" width="23" height="19" fill="#b8dcf8" stroke="#58a0d8" stroke-width=".8"/><rect x="17" y="9" width="4" height="3" fill="#e03020"/><rect x="7" y="16" width="11" height="5" fill="#fff"/><path d="M0 24Q10 30 20 24Q26 21 31 25" fill="none" stroke="#f8c050" stroke-width="2"/></svg><svg class="a" style="left:320px;top:1162px" width="36" height="34" viewBox="0 0 36 34"><path d="M3 3H31V11H25V9H20V32H14V9H9V11H3Z" fill="#3898d0" stroke="#000080" stroke-width="1.3"/><path d="M4.5 4.5H29.5" stroke="#80f0ff" stroke-width="1.2"/><path d="M2 12H14L16 14V33H2Z" fill="#f0f0f0" stroke="#404040" stroke-width="1.2"/><path d="M4 15H10M4 18H12M4 21H9M5 25H12" stroke="#606060"/><path d="M10 15L24 26" stroke="#c08000" stroke-width="4"/><path d="M10 15L24 26" stroke="#ffe000" stroke-width="2.5"/><path d="M8 13L11 17L12 14Z" fill="#000"/><circle cx="24" cy="26" r="1.5" fill="#f08080"/></svg><svg class="a" style="left:368px;top:1163px" width="34" height="34" viewBox="0 0 34 34"><defs><linearGradient id="pl" x1="0" y1="0" x2="0" y2="1"><stop offset="0" stop-color="#e0f0fc"/><stop offset="1" stop-color="#98c8e8"/></linearGradient></defs><path d="M2 20Q0 10 14 6Q28 3 30 14Q31 22 22 26Q14 29 10 25Q12 21 7 22Q4 25 2 20Z" fill="url(#pl)" stroke="#70a8d0" stroke-width=".8"/><circle cx="6" cy="16" r="2.3" fill="#e04040"/><circle cx="11.5" cy="10.5" r="2.3" fill="#50c040"/><circle cx="19" cy="8.5" r="2.3" fill="#f0b020"/><circle cx="14.5" cy="16.5" r="2" fill="none" stroke="#70a8d0" stroke-width="1.2"/><path d="M29 5L17 30" stroke="#e08020" stroke-width="2.5"/><path d="M27 3L32 0L34 5L30 8Z" fill="#d8b070"/></svg><svg class="a" style="left:420px;top:1163px" width="34" height="34" viewBox="0 0 34 34"><defs><linearGradient id="fz" x1="0" y1="0" x2="1" y2="1"><stop offset="0" stop-color="#0000ff"/><stop offset=".5" stop-color="#200060"/><stop offset="1" stop-color="#800020"/></linearGradient><linearGradient id="fzl" x1="0" y1="0" x2="0" y2="1"><stop offset="0" stop-color="#ffff00"/><stop offset="1" stop-color="#ff6000"/></linearGradient></defs><rect x="1" y="1" width="32" height="32" fill="url(#fz)"/><path d="M7 28V5H28V10H12V13H28V17L19 25H28V28H14V25L23 17H12V28Z" fill="url(#fzl)"/></svg><svg class="a" style="left:469px;top:1161px" width="34" height="36" viewBox="0 0 34 36"><circle cx="17" cy="17" r="14.5" fill="#e81010"/><path d="M2.5 17H31.5A14.5 14.5 0 0 1 2.5 17Z" fill="#f07060"/><path d="M10 10L17 4L24 10Z" fill="#fff"/><rect x="10" y="11" width="14" height="2" fill="#fff"/><rect x="11" y="14" width="2.5" height="9" fill="#fff"/><rect x="15.7" y="14" width="2.5" height="9" fill="#fff"/><rect x="20.5" y="14" width="2.5" height="9" fill="#fff"/><rect x="9" y="24" width="16" height="2" fill="#fff"/></svg>
<!-- tray -->
<div class="a" style="left:1596px;top:1160px;width:322px;height:38px;box-shadow:inset 1px 1px 0 #808080,inset -1px -1px 0 #fff"></div>
<div class="t" style="left:1859px;top:1165px;text-align:center">4:33</div>
<div class="t" style="left:1845px;top:1181px">24-6-2011</div>
<svg class="a" style="left:1603px;top:1170px" width="16" height="16" viewBox="0 0 16 16"><path d="M4 11L7 9L13 9.5M7 9L11 4M7 9L7 14" stroke="#f0c0c0" stroke-width=".8"/><circle cx="7" cy="9" r="3.3" fill="#e02828"/><circle cx="6" cy="8" r="1" fill="#ff9090"/><circle cx="3.5" cy="11" r="1.7" fill="#f0f0f0" stroke="#909090" stroke-width=".5"/><circle cx="13" cy="9.5" r="1.7" fill="#f0f0f0" stroke="#909090" stroke-width=".5"/><circle cx="11" cy="3.5" r="1.5" fill="#fafafa"/><circle cx="7" cy="14" r="1" fill="#d0d0d0"/></svg><svg class="a" style="left:1626px;top:1170px" width="18" height="18" viewBox="0 0 18 18"><path d="M1 8L5 5H8V1H10V3H15L16 4V5H10V8H17V16H1Z" fill="#00c040"/><path d="M10 8H17V16H10Z" fill="#009030"/><rect x="2" y="16" width="15" height="1.2" fill="#202020"/><path d="M4.5 11L7.5 14L13.5 7.5" fill="none" stroke="#fff" stroke-width="2"/></svg><svg class="a" style="left:1651px;top:1172px" width="16" height="13" viewBox="0 0 16 13"><rect x=".5" y=".5" width="15" height="12" fill="#d8ecfc" stroke="#60a0e0"/><rect x="11" y="2" width="3" height="3" fill="#f04020"/><path d="M3 5H9M3 8H11" stroke="#a0c0e0"/></svg><svg class="a" style="left:1675px;top:1170px" width="17" height="17" viewBox="0 0 17 17"><rect x=".5" y=".5" width="15" height="15" rx="1" fill="#f4f4f4" stroke="#a0a0a0"/><circle cx="8" cy="8" r="6" fill="#e8e8e8" stroke="#505050" stroke-width="1.1"/><path d="M8 2V14M2 8H14M4 4L12 12M12 4L4 12" stroke="#ffffff" stroke-width=".6"/><circle cx="7.5" cy="4.5" r="1.2" fill="#2070f0"/></svg><svg class="a" style="left:1699px;top:1170px" width="17" height="17" viewBox="0 0 17 17"><circle cx="8.5" cy="8.5" r="7.5" fill="#f0f4ff" stroke="#3060d0" stroke-width="1.4"/><path d="M10 2L5 10H8L7 15L12 7H9Z" fill="#2050d0"/></svg><svg class="a" style="left:1723px;top:1170px" width="17" height="17" viewBox="0 0 17 17"><rect x="2" y="0" width="5" height="5" fill="#c0c0c0" stroke="#606060" stroke-width=".8"/><path d="M1 5H8V12L6 14V16H3V14L1 12Z" fill="#505050"/><circle cx="12" cy="12" r="4.5" fill="#20a030"/><path d="M9.5 12L11.5 14L14.5 10" fill="none" stroke="#fff" stroke-width="1.4"/></svg><svg class="a" style="left:1747px;top:1170px" width="17" height="17" viewBox="0 0 17 17"><rect x="3" y="1" width="11" height="15" fill="#60a8e8"/><rect x="5" y="3" width="3" height="3" fill="#f04020"/><rect x="9" y="3" width="3" height="3" fill="#40c040"/><rect x="5" y="7" width="3" height="3" fill="#2080f0"/><rect x="9" y="7" width="3" height="3" fill="#f8c010"/><path d="M1 11Q2 5 10 4Q16 4 16 6" fill="none" stroke="#f89020" stroke-width="1.4"/></svg><svg class="a" style="left:1771px;top:1170px" width="17" height="17" viewBox="0 0 17 17"><path d="M2.5 1V16" stroke="#606060" stroke-width="1.4"/><path d="M3 2Q7 0 10 2Q13 3 15 2V9Q12 10 10 9Q7 7 3 9Z" fill="#fff" stroke="#808080"/></svg><svg class="a" style="left:1795px;top:1170px" width="17" height="17" viewBox="0 0 17 17"><rect x="4.5" y="3.5" width="11" height="9" fill="#d0d0d0" stroke="#606060"/><rect x="6" y="5" width="8" height="6" fill="#b0b0b0"/><path d="M8 13V15M5 15.5H13" stroke="#606060"/><path d="M2 1V13M1.5 3H4.5V6H1.5" fill="none" stroke="#707070"/></svg><svg class="a" style="left:1820px;top:1170px" width="16" height="17" viewBox="0 0 16 17"><path d="M2 6H5L9 2V15L5 11H2Z" fill="#f0f0f0" stroke="#808080"/><path d="M12 5Q14 8.5 12 12" fill="none" stroke="#a0a0a0"/></svg><svg class="a" style="left:1900px;top:1173px" width="16" height="14" viewBox="0 0 16 14"><rect x="0" y="0" width="16" height="12" fill="#2060c0"/><rect x="1" y="1" width="14" height="6" fill="#4890e0"/><rect x="0" y="10" width="16" height="3" fill="#203040"/><rect x="1" y="10" width="2" height="2" fill="#40c040"/></svg>

</body></html>
